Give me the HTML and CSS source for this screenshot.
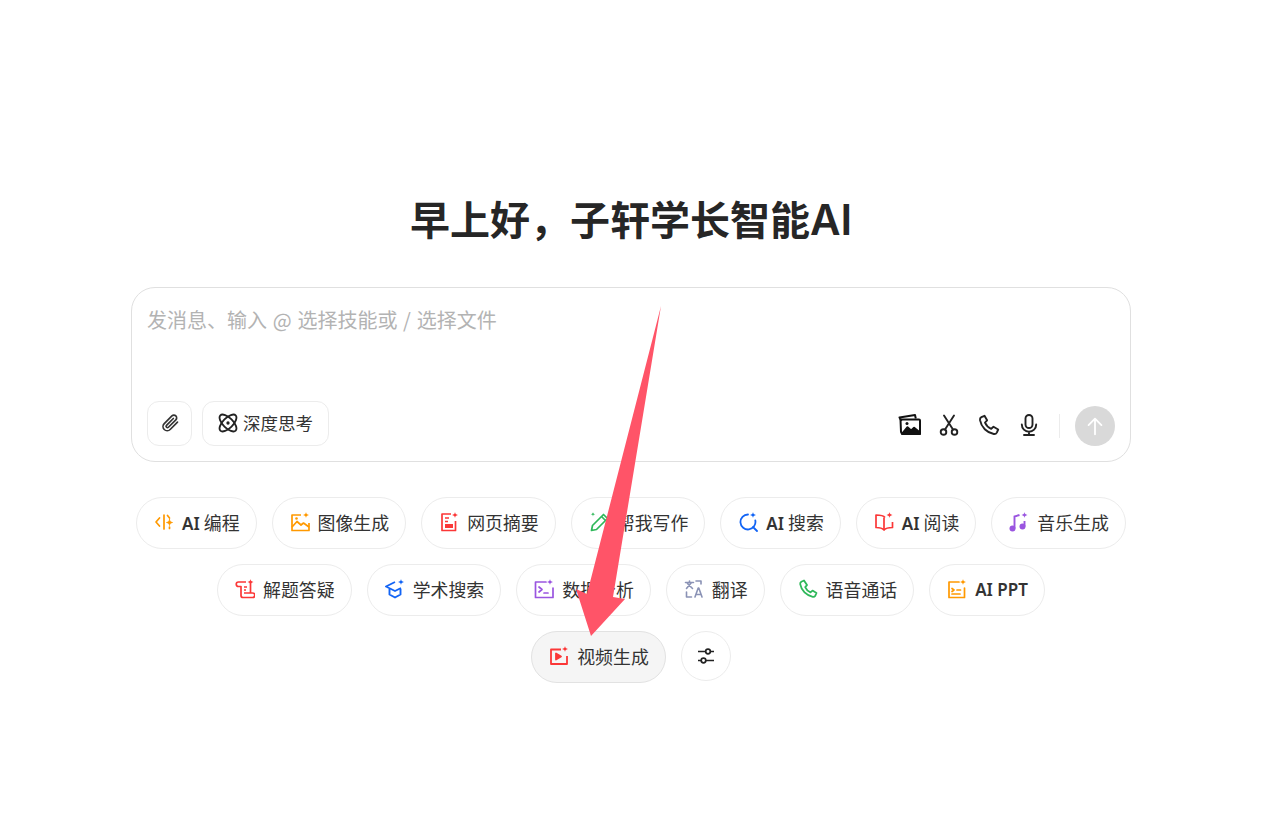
FILE: index.html
```html
<!DOCTYPE html>
<html lang="zh-CN">
  <head>
    <meta charset="UTF-8" />
    <title>子轩学长智能AI</title>
    <link rel="stylesheet" href="styles.css">
  </head>
  <body>
    <main class="home">
      <h1 class="home-title">早上好，子轩学长智能<span class="latin">AI</span></h1>

      <section class="composer">
        <p class="composer-placeholder">发消息、输入 @ 选择技能或 / 选择文件</p>
        <div class="composer-bar">
          <div class="composer-left">
            <button class="tool-btn tool-square">
              <svg class="icon-md" viewBox="0 0 24 24" fill="none" stroke="#333" stroke-width="2" stroke-linecap="round"><path d="M21 11l-8.800 8.800a5 5 0 0 1-7.100-7.100l9.200-9.200a3.300 3.300 0 0 1 4.700 4.700l-8.900 8.900a1.600 1.600 0 0 1-2.300-2.300l8.200-8.200"/></svg>
            </button>
            <button class="tool-btn tool-wide">
              <svg class="icon-md" viewBox="0 0 24 24" fill="none" stroke="#222" stroke-width="2.200"><ellipse cx="12" cy="12" rx="13" ry="6" transform="rotate(45 12 12)"/><ellipse cx="12" cy="12" rx="13" ry="6" transform="rotate(-45 12 12)"/><circle cx="12" cy="12" r="2" fill="#222" stroke="none"/></svg>
              <span>深度思考</span>
            </button>
          </div>
          <div class="composer-right">
            <svg class="icon-lg" viewBox="0 0 24 24" fill="none" stroke="#111" stroke-width="2" stroke-linejoin="round"><path d="M4.500 8L2.500 4.400 18 2l.8 3.500"/><path d="M3.500 6.500H22a1 1 0 0 1 1 1v13.300H6.500a2.500 2.500 0 0 1-2.500-2z"/><path d="M5 21l5.500-6.800 3.600 3.200 3-2.600 5.900 4.700V21z" fill="#111"/><circle cx="10" cy="10.600" r="1.500" fill="#111" stroke="none"/></svg>
            <svg class="icon-lg" viewBox="0 0 24 24" fill="none" stroke="#222" stroke-width="1.900" stroke-linecap="round"><circle cx="6.500" cy="19" r="2.800"/><circle cx="17.500" cy="19" r="2.800"/><path d="M8 16.500L17 2.500M16 16.500L7 2.500"/></svg>
            <svg class="icon-lg" viewBox="0 0 24 24" fill="none" stroke="#222" stroke-width="1.900" stroke-linejoin="round"><path d="M7.500 2.800L4.400 4.200c-1.100.6-1.600 1.700-1.400 3 1.300 7 6.800 12.500 13.800 13.800 1.300.2 2.400-.3 3-1.400l1.400-3.100-4.700-2.800-2.300 2.100c-2.800-1.200-5-3.400-6.200-6.200l2.100-2.300z"/></svg>
            <svg class="icon-lg" viewBox="0 0 24 24" fill="none" stroke="#222" stroke-width="1.900" stroke-linecap="round"><rect x="8.500" y="2" width="7" height="13" rx="3.500"/><path d="M4.800 11.500a7.200 7.200 0 0 0 14.400 0M12 18.700V22M7 22h10"/></svg>
            <span class="composer-divider"></span>
            <button class="send-btn">
              <svg viewBox="0 0 24 24" width="22" height="22" fill="none" stroke="#fff" stroke-width="2" stroke-linecap="round" stroke-linejoin="round"><path d="M12 21V4M5 11l7-7 7 7"/></svg>
            </button>
          </div>
        </div>
      </section>

      <nav class="skills">
        <div class="skills-row">
          <a class="chip">
            <svg class="icon" viewBox="0 0 20 20" fill="none" stroke="#f90" stroke-width="1.700" stroke-linecap="round" stroke-linejoin="round"><path d="M5.500 6L2 10l3.500 4M10 3v14"/><path d="M15.500 7.500c.3 1.800 1 2.500 3 3-2 .5-2.700 1.200-3 3-.3-1.800-1-2.500-3-3 2-.5 2.700-1.200 3-3z" fill="#f90" stroke-width=".8"/><path d="M13.500 3.500L15.500 6M15.500 15v1.500"/></svg>
            <span><span class="latin-bold">AI</span> 编程</span>
          </a>
          <a class="chip">
            <svg class="icon" viewBox="0 0 20 20" fill="none" stroke="#f90" stroke-width="1.700" stroke-linejoin="round"><path d="M11 3H2v15.500h17V11"/><path d="M2 15l5-5.500 4 3.500 2.500-2 5.500 4"/><circle cx="6.500" cy="6.500" r="1.300" fill="#f90" stroke="none"/><path d="M16 0c.3 1.800 1 2.500 3 3-2 .5-2.700 1.200-3 3-.3-1.800-1-2.500-3-3 2-.5 2.700-1.200 3-3z" fill="#f90" stroke="none"/></svg>
            <span>图像生成</span>
          </a>
          <a class="chip">
            <svg class="icon" viewBox="0 0 20 20" fill="none" stroke="#fb3737" stroke-width="1.700" stroke-linejoin="round"><path d="M12 2H3v16.500h13.500V9"/><path d="M6 6h4M6 9.500h3"/><rect x="6" y="12" width="8" height="4" fill="#fb3737" stroke="none"/><path d="M16 0c.3 1.800 1 2.500 3 3-2 .5-2.700 1.200-3 3-.3-1.800-1-2.500-3-3 2-.5 2.700-1.200 3-3z" fill="#fb3737" stroke="none"/></svg>
            <span>网页摘要</span>
          </a>
          <a class="chip">
            <svg class="icon" viewBox="0 0 20 20" fill="none" stroke="#2fb85a" stroke-width="1.700" stroke-linejoin="round"><path d="M2.500 18.500l1-5L14.500 2.500l4 4L7.500 17.500z"/><path d="M12.500 4.500l4 4"/><path d="M4 0c.2 1.500.8 2 2.300 2.300C4.800 2.500 4.200 3 4 4.500 3.800 3 3.200 2.500 1.700 2.300 3.200 2 3.800 1.500 4 0z" fill="#2fb85a" stroke="none"/></svg>
            <span>帮我写作</span>
          </a>
          <a class="chip">
            <svg class="icon" viewBox="0 0 20 20" fill="none" stroke="#1264f5" stroke-width="1.800" stroke-linecap="round"><path d="M10 2.500a7.500 7.500 0 1 0 7.300 6M15 15l4 4"/><path d="M15 0c.3 1.800 1 2.500 3 3-2 .5-2.700 1.200-3 3-.3-1.800-1-2.500-3-3 2-.5 2.700-1.200 3-3z" fill="#1264f5" stroke="none"/></svg>
            <span><span class="latin-bold">AI</span> 搜索</span>
          </a>
          <a class="chip">
            <svg class="icon" viewBox="0 0 20 20" fill="none" stroke="#fb3737" stroke-width="1.700" stroke-linejoin="round"><path d="M11 5.500C9.500 3.500 6 3 2 3v12.500c3.500 0 6 .3 8 2.500 2-2.200 5-2.500 8.500-2.500V10"/><path d="M10 5.500V18"/><path d="M15.500 0c.3 1.800 1 2.500 3 3-2 .5-2.700 1.200-3 3-.3-1.800-1-2.500-3-3 2-.5 2.700-1.200 3-3z" fill="#fb3737" stroke="none"/></svg>
            <span><span class="latin-bold">AI</span> 阅读</span>
          </a>
          <a class="chip">
            <svg class="icon" viewBox="0 0 20 20" fill="none" stroke="#9a55e0" stroke-width="1.900"><circle cx="3.500" cy="16.500" r="3" fill="#9a55e0" stroke="none"/><circle cx="13.500" cy="14.500" r="3" fill="#9a55e0" stroke="none"/><path d="M5.500 16.500V4.500l5-1.500"/><path d="M15.500 14.500V9"/><path d="M15.500 0c.3 1.800 1 2.500 3 3-2 .5-2.700 1.200-3 3-.3-1.800-1-2.500-3-3 2-.5 2.700-1.200 3-3z" fill="#9a55e0" stroke="none"/></svg>
            <span>音乐生成</span>
          </a>
        </div>

        <div class="skills-row">
          <a class="chip">
            <svg class="icon" viewBox="0 0 20 20" fill="none" stroke="#fb3737" stroke-width="1.700" stroke-linejoin="round"><path d="M11 3H3.500a1.800 1.800 0 0 0 0 4.500H6v9a2 2 0 0 0 2 2h9.500a1.800 1.800 0 0 0 0-4.500H9"/><path d="M9 8h3M9 11h2"/><path d="M15.500 3v11"/><path d="M15.500 0c.3 1.800 1 2.500 3 3-2 .5-2.700 1.200-3 3-.3-1.800-1-2.500-3-3 2-.5 2.700-1.200 3-3z" fill="#fb3737" stroke="none"/></svg>
            <span>解题答疑</span>
          </a>
          <a class="chip">
            <svg class="icon" viewBox="0 0 20 20" fill="none" stroke="#1264f5" stroke-width="1.900" stroke-linejoin="round"><path d="M10 3L1 7.500 10 12l6-3"/><path d="M4.500 10v5.500L10 18.500l5.500-3V10"/><path d="M16 0c.3 1.800 1 2.500 3 3-2 .5-2.700 1.200-3 3-.3-1.800-1-2.500-3-3 2-.5 2.700-1.200 3-3z" fill="#1264f5" stroke="none"/></svg>
            <span>学术搜索</span>
          </a>
          <a class="chip">
            <svg class="icon" viewBox="0 0 20 20" fill="none" stroke="#9a55e0" stroke-width="1.700" stroke-linecap="round" stroke-linejoin="round"><path d="M12 3H1.500v15.500H19V9"/><path d="M5 8l3 2.500L5 13M10 14h4"/><path d="M16 0c.3 1.800 1 2.500 3 3-2 .5-2.700 1.200-3 3-.3-1.800-1-2.500-3-3 2-.5 2.700-1.200 3-3z" fill="#9a55e0" stroke="none"/></svg>
            <span>数据分析</span>
          </a>
          <a class="chip">
            <svg class="icon" viewBox="0 0 20 20" fill="none" stroke="#8a92b5" stroke-width="1.600" stroke-linecap="round" stroke-linejoin="round"><path d="M1.500 3.500h8M5.500 2v1.500M2.500 9.500l5-6M3.500 4.500l5 5"/><path d="M11 18l3.200-9h.6L18 18M12 15.500h5"/><path d="M12 2h5v3M2.500 13v5h5"/></svg>
            <span>翻译</span>
          </a>
          <a class="chip">
            <svg class="icon" viewBox="0 0 20 20" fill="none" stroke="#2fb85a" stroke-width="1.800" stroke-linejoin="round"><path d="M6 1.500L3.300 2.700C2.400 3.300 2 4.200 2.200 5.200 3.300 11.500 8.500 16.700 14.800 17.800c1 .2 1.900-.2 2.500-1.100l1.200-2.700-4-2.400-2 1.800c-2.400-1-4.300-2.900-5.300-5.300l1.800-2z"/></svg>
            <span>语音通话</span>
          </a>
          <a class="chip">
            <svg class="icon" viewBox="0 0 20 20" fill="none" stroke="#f90" stroke-width="1.700" stroke-linecap="round" stroke-linejoin="round"><path d="M12 3H2v15.500h15.500V9"/><path d="M5 9.500l2 1.500-2 1.500M10 11h3.500M5 15h8"/><path d="M16 0c.3 1.800 1 2.500 3 3-2 .5-2.700 1.200-3 3-.3-1.800-1-2.500-3-3 2-.5 2.700-1.200 3-3z" fill="#f90" stroke="none"/></svg>
            <span class="latin-bold">AI PPT</span>
          </a>
        </div>

        <div class="skills-row">
          <a class="chip chip-active">
            <svg class="icon" viewBox="0 0 20 20" fill="none" stroke="#fb3737" stroke-width="1.800" stroke-linejoin="round"><path d="M12 3.500H2v14.500h16V10"/><path d="M7 7.500v6l5-3z" fill="#fb3737"/><path d="M16 0c.3 1.800 1 2.500 3 3-2 .5-2.700 1.200-3 3-.3-1.800-1-2.500-3-3 2-.5 2.700-1.200 3-3z" fill="#fb3737" stroke="none"/></svg>
            <span>视频生成</span>
          </a>
          <a class="chip-round">
            <svg class="icon" viewBox="0 0 20 20" fill="#fff" stroke="#222" stroke-width="1.700"><path d="M2 5.500h16M2 14.500h16"/><circle cx="12" cy="5.500" r="2.300"/><circle cx="7.500" cy="14.500" r="2.300"/></svg>
          </a>
        </div>
      </nav>
    </main>

    <svg class="arrow" viewBox="0 0 1262 825"><polygon points="661,306 613,597 625,599 591,636 576,589 587,594" fill="#ff5468"/></svg>
  </body>
</html>
```

FILE: styles.css
```css
* {
  box-sizing: border-box;
}

body {
  margin: 0;
  background: #fff;
  color: #333;
  font-family: "Noto Sans CJK SC", "Noto Sans", sans-serif;
}

.home {
  width: 1000px;
  margin: 0 auto;
  padding-top: 191px;
}

.home-title {
  margin: 0 0 41px;
  height: 55px;
  line-height: 55px;
  text-align: center;
  font-size: 40px;
  font-weight: 700;
  color: #262626;
}

.latin {
  font-family: "Inter", sans-serif;
  font-size: 42px;
  font-weight: 600;
}

.latin-bold {
  font-family: "Noto Sans", sans-serif;
  font-size: 17px;
  font-weight: 600;
}

.composer {
  height: 175px;
  padding: 16px 15px 15px;
  border: 1px solid #e0e0e0;
  border-radius: 24px;
  display: flex;
  flex-direction: column;
  justify-content: space-between;
}

.composer-placeholder {
  margin: 0;
  font-size: 20px;
  line-height: 32px;
  word-spacing: 1.25px;
  color: #b3b3b3;
}

.composer-bar {
  display: flex;
  justify-content: space-between;
  align-items: flex-end;
}

.composer-left {
  display: flex;
  gap: 10px;
}

.tool-btn {
  height: 45px;
  padding: 0 0 2px;
  display: flex;
  align-items: center;
  justify-content: center;
  gap: 5px;
  background: #fff;
  border: 1px solid #ececec;
  border-radius: 12px;
  font-family: inherit;
  font-size: 17.5px;
  color: #333;
}

.tool-square {
  width: 45px;
}

.tool-wide {
  width: 127px;
}

.composer-right {
  display: flex;
  align-items: center;
  gap: 16px;
}

.composer-divider {
  width: 1px;
  height: 24px;
  margin: 0 -1px 0 2px;
  background: #ececec;
}

.send-btn {
  width: 40px;
  height: 40px;
  padding: 0;
  display: flex;
  align-items: center;
  justify-content: center;
  border: none;
  border-radius: 50%;
  background: #d9d9d9;
}

.icon,
.icon-md {
  width: 20px;
  height: 20px;
  flex: none;
}

.icon-lg {
  width: 24px;
  height: 24px;
  flex: none;
  margin-bottom: 3px;
}

.skills {
  margin-top: 35px;
  display: flex;
  flex-direction: column;
  gap: 15px;
}

.skills-row {
  display: flex;
  justify-content: center;
  gap: 15px;
}

.chip {
  height: 52px;
  padding: 0 16px 2px 17px;
  display: flex;
  align-items: center;
  gap: 8px;
  border: 1px solid #ececec;
  border-radius: 26px;
  font-size: 17.9px;
  white-space: nowrap;
  color: #333;
}

.chip-active {
  background: #f5f5f5;
  border-color: #e2e2e2;
}

.chip-round {
  width: 50px;
  height: 50px;
  display: flex;
  align-items: center;
  justify-content: center;
  border: 1px solid #ececec;
  border-radius: 50%;
}

.arrow {
  position: absolute;
  left: 0;
  top: 0;
  width: 1262px;
  height: 825px;
  pointer-events: none;
}
```
